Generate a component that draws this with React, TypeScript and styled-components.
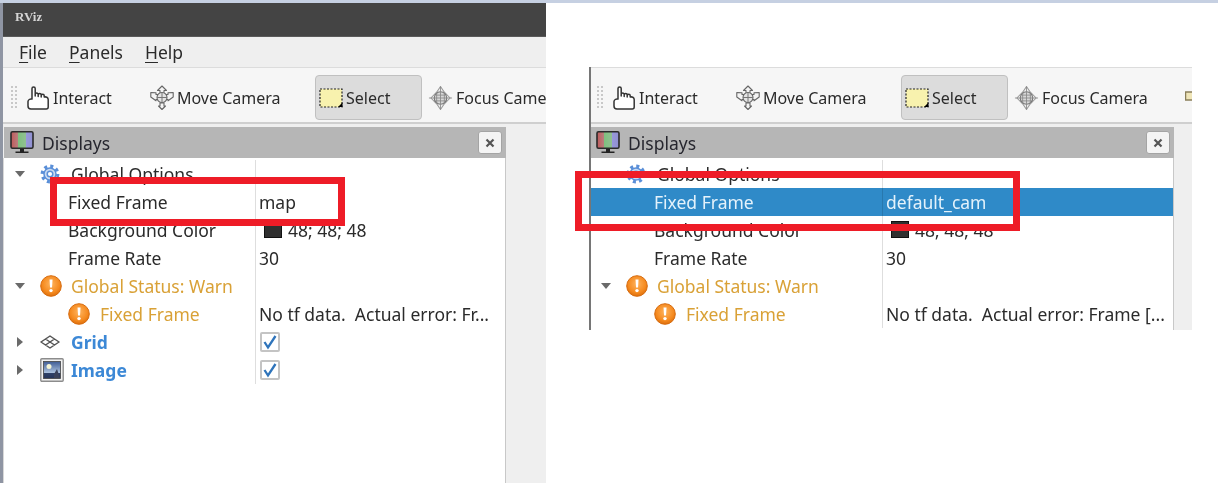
import React from 'react'
import styled, { createGlobalStyle } from 'styled-components'

const GlobalStyle = createGlobalStyle`
  html, body {
    margin: 0;
    background: #fff;
  }
`;

const Page = styled.div`
  position: relative;
  display: flex;
  align-items: flex-start;
  width: 1218px;
  height: 483px;
  box-sizing: border-box;
  overflow: hidden;
  border-top: 3px solid #c6d0e2;
  background: #fff;
  font-family: "Noto Sans", sans-serif;
  font-size: 17.5px;
  color: #2b2b2b;
  filter: blur(0.35px);
`;

const Window = styled.div<{ $w: number; $h: number; $top: number; $left: number; $edge: number; $edgeColor: string }>`
  display: flex;
  flex-direction: column;
  flex: 0 0 auto;
  box-sizing: border-box;
  width: ${p => p.$w}px;
  height: ${p => p.$h}px;
  margin-top: ${p => p.$top}px;
  margin-left: ${p => p.$left}px;
  overflow: hidden;
  border-left: ${p => p.$edge}px solid ${p => p.$edgeColor};
  background: #efefef;
`;

const TitleBar = styled.div`
  flex: 0 0 34px;
  display: flex;
  align-items: center;
  box-sizing: border-box;
  padding: 0 0 6px 12px;
  background: #444444;
  border-bottom: 1px solid #5a5a5a;
  color: #d4d4d4;
  font-family: "Liberation Serif", serif;
  font-size: 13px;
  font-weight: bold;
`;

const MenuBar = styled.div`
  flex: 0 0 30px;
  display: flex;
  align-items: center;
  gap: 22px;
  padding-left: 16px;
  background: #efefef;
`;

const MenuItem = styled.span`
  line-height: 30px;

  u {
    text-underline-offset: 3px;
  }
`;

const ToolBar = styled.div<{ $pad: number }>`
  flex: 0 0 57px;
  display: flex;
  align-items: center;
  box-sizing: border-box;
  padding: 5px 0 0 ${p => p.$pad}px;
  border-top: 1px solid #dcdcdc;
  border-bottom: 2px solid #cfcfcf;
  background: #f6f6f6;
  font-size: 16px;
`;

const Grip = styled.div`
  flex: 0 0 7px;
  height: 25px;
  margin-right: 6px;
  background-image: radial-gradient(circle, #c8c8c8 1px, transparent 1.2px);
  background-size: 4px 4px;
`;

const Tool = styled.div<{ $w: number; $active?: boolean }>`
  flex: 0 0 ${p => p.$w}px;
  display: flex;
  align-items: center;
  gap: 3px;
  box-sizing: border-box;
  height: 45px;
  margin-right: ${p => (p.$active ? 2 : 0)}px;
  padding-left: 3px;
  border-radius: 4px;
  border: 1px solid ${p => (p.$active ? '#c0c0c0' : 'transparent')};
  background: ${p => (p.$active ? '#dcdcdc' : 'transparent')};
`;

const Dock = styled.div<{ $left: number; $right: number }>`
  flex: 1;
  display: flex;
  flex-direction: column;
  min-height: 0;
  margin: 3px ${p => p.$right}px 0 ${p => p.$left}px;
`;

const PanelHeader = styled.div<{ $inset: number }>`
  flex: 0 0 31px;
  display: flex;
  align-items: center;
  gap: 8px;
  padding: 0 4px 0 ${p => p.$inset}px;
  background: #b6b6b6;
`;

const PanelTitle = styled.span`
  flex: 1;
  color: #26262e;
`;

const CloseButton = styled.div`
  display: flex;
  align-items: center;
  justify-content: center;
  width: 24px;
  height: 23px;
  box-sizing: border-box;
  border: 1px solid #a4a4a4;
  border-radius: 3px;
  background: #f4f4f4;
`;

const Tree = styled.div`
  flex: 1;
  padding-top: 2px;
  background: #fff;
  border-right: 1px solid #c8c8c8;
  border-left: 1px solid #d8d8d8;
  margin-left: -1px;
`;

const Row = styled.div<{ $split: number; $selected?: boolean }>`
  display: grid;
  grid-template-columns: ${p => p.$split}px 1fr;
  height: 28px;
  background: ${p => (p.$selected ? '#2f8ac8' : 'transparent')};
  color: ${p => (p.$selected ? '#e4f2fb' : 'inherit')};
`;

const NameCell = styled.div<{ $inset: number }>`
  display: flex;
  align-items: center;
  padding: 0 0 1px ${p => p.$inset}px;
  border-right: 1px solid rgba(0, 0, 0, 0.13);
  white-space: nowrap;
`;

const ArrowSlot = styled.span<{ $depth: number }>`
  flex: 0 0 ${p => (p.$depth ? 54 : 26)}px;
  display: flex;
  align-items: center;
  justify-content: flex-start;
  padding-left: 1px;
  box-sizing: border-box;
`;

const Arrow = styled.span<{ $open: boolean }>`
  width: 0;
  height: 0;
  ${p =>
    p.$open
      ? `
    border-left: 5px solid transparent;
    border-right: 5px solid transparent;
    border-top: 6px solid #6a6a6a;
  `
      : `
    margin-left: 2px;
    border-top: 5px solid transparent;
    border-bottom: 5px solid transparent;
    border-left: 6px solid #6a6a6a;
  `}
`;

const IconSlot = styled.span<{ $w: number }>`
  flex: 0 0 ${p => p.$w}px;
  display: flex;
  align-items: center;
`;

const RowLabel = styled.span<{ $kind?: string }>`
  color: ${p => (p.$kind === 'warn' ? '#d9a136' : p.$kind === 'display' ? '#3c88d6' : 'inherit')};
  font-weight: ${p => (p.$kind === 'display' ? 700 : 400)};
`;

const ValueCell = styled.div`
  display: flex;
  align-items: center;
  gap: 6px;
  padding: 0 0 1px 3px;
  overflow: hidden;
  white-space: pre;
`;

const Swatch = styled.span`
  flex: 0 0 auto;
  box-sizing: border-box;
  width: 18px;
  height: 17px;
  margin-left: 5px;
  border: 1px solid #111;
  background: #303030;
`;

const CheckBox = styled.span`
  display: flex;
  align-items: center;
  justify-content: center;
  box-sizing: border-box;
  width: 20px;
  height: 20px;
  margin-left: 1px;
  border: 2px solid #c4c4c4;
  border-radius: 2px;
  background: #fff;
`;

const RedBox = styled.div<{ $x: number; $y: number; $w: number; $h: number }>`
  position: absolute;
  left: ${p => p.$x}px;
  top: ${p => p.$y}px;
  width: ${p => p.$w}px;
  height: ${p => p.$h}px;
  box-sizing: border-box;
  border: 7px solid #ee1c27;
`;

const HandIcon = () => (
  <svg width="23" height="26" viewBox="2 0 23 26">
    <path
      d="M7 14V3.500a1.600 1.600 0 0 1 3.200 0V11V9.500a1.500 1.500 0 0 1 3 0V11.500V10a1.500 1.500 0 0 1 3 0V12V10.800a1.500 1.500 0 0 1 3 0V12c1.800-.4 4 .2 4 2.500V22a2 2 0 0 1-2 2H6a3 3 0 0 1-3-3v-4.500C3 15 5 13.500 7 14Z"
      fill="#fff"
      stroke="#333"
      strokeWidth="1.500"
      strokeLinejoin="round"
    />
  </svg>
);

const MoveIcon = () => (
  <svg width="24" height="26" viewBox="0 0 24 26">
    <g fill="#f4f4f4" stroke="#666" strokeWidth="1.100" strokeLinejoin="round">
      <path d="M12 1l4.500 4.500H14V8h-4V5.500H7.500z" />
      <path d="M12 24.500l3.500-3.500H14v-3h-4v3H8.500z" />
      <path d="M.8 7.500L6 7.800v1.700h3v5H6v1.200L.8 12z" />
      <path d="M23.200 7.500L18 7.800v1.700h-3v5h3v1.200L23.200 12z" />
      <circle cx="12" cy="12.500" r="5" fill="#e4e4e4" />
    </g>
    <path d="M7 12.500h10M12 7.500v10" stroke="#777" strokeWidth="1" />
  </svg>
);

const SelectIcon = () => (
  <svg width="24" height="20" viewBox="0 0 24 20">
    <rect x="1" y="1" width="22" height="18" fill="#f8f2ae" stroke="#222" strokeWidth="1.200" strokeDasharray="2 1.500" />
    <path d="M19 19h4.500v-4.500z" fill="#000" />
  </svg>
);

const FocusIcon = () => (
  <svg width="25" height="26" viewBox="0 0 26 26">
    <path d="M13 1l4 6 6 6-6 6-4 6-4-6-6-6 6-6z" fill="#efefef" stroke="#999" strokeWidth="1.100" strokeLinejoin="round" />
    <circle cx="13" cy="13" r="6.500" fill="#d8d8d8" stroke="#777" strokeWidth="1.200" />
    <path d="M1 13h24M13 1v24M9 8v10M17 8v10M8 10h10M8 16h10" stroke="#8a8a8a" strokeWidth="0.900" />
  </svg>
);

const NextToolIcon = () => (
  <svg width="24" height="26" viewBox="0 0 24 26">
    <rect x="0.500" y="7" width="14" height="8" fill="#efe5b8" stroke="#8a7f5a" strokeWidth="1.500" />
  </svg>
);

const MonitorIcon = () => (
  <svg width="24" height="24" viewBox="0 0 24 24">
    <defs>
      <linearGradient id="screenColors" x1="0" x2="1" y1="0" y2="0">
        <stop offset="0" stopColor="#c05a5a" />
        <stop offset="0.33" stopColor="#b98080" />
        <stop offset="0.34" stopColor="#7fc07f" />
        <stop offset="0.66" stopColor="#90c090" />
        <stop offset="0.67" stopColor="#9898dc" />
        <stop offset="1" stopColor="#9090d0" />
      </linearGradient>
    </defs>
    <rect x="1" y="0.800" width="22" height="16.500" rx="1.500" fill="url(#screenColors)" stroke="#2a2a2a" strokeWidth="1.600" />
    <path d="M10 18h4v2.500h4.500v1.500h-13v-1.500H10z" fill="#222" />
  </svg>
);

const GearIcon = () => (
  <svg width="20" height="20" viewBox="0 0 20 20">
    <circle cx="10" cy="10" r="7.700" fill="none" stroke="#5a8fd8" strokeWidth="3.400" strokeDasharray="3 3.050" />
    <circle cx="10" cy="10" r="6" fill="#c9daf2" stroke="#5a8fd8" strokeWidth="1.500" />
    <circle cx="10" cy="10" r="2.800" fill="#fff" stroke="#5a8fd8" strokeWidth="1.500" />
  </svg>
);

const WarnIcon = () => (
  <svg width="22" height="22" viewBox="0 0 22 22">
    <defs>
      <radialGradient id="warnFill" cx="0.5" cy="0.4" r="0.6">
        <stop offset="0" stopColor="#ffb45e" />
        <stop offset="0.7" stopColor="#f58a1f" />
        <stop offset="1" stopColor="#dd6f0c" />
      </radialGradient>
    </defs>
    <circle cx="11" cy="11" r="10.300" fill="url(#warnFill)" stroke="#d76c0f" strokeWidth="1" />
    <path d="M9.500 4.500h3l-.5 8h-2z" fill="#fff" />
    <circle cx="11" cy="15.600" r="1.700" fill="#fff" />
  </svg>
);

const GridIcon = () => (
  <svg width="20" height="14" viewBox="0 0 20 14">
    <path d="M10 1l9 6-9 6-9-6zM5.500 4l9 6M14.500 4l-9 6" fill="none" stroke="#555" strokeWidth="1.500" strokeLinejoin="round" />
  </svg>
);

const ImageIcon = () => (
  <svg width="24" height="24" viewBox="0 0 24 24">
    <defs>
      <linearGradient id="imageSky" x1="0" x2="0" y1="0" y2="1">
        <stop offset="0" stopColor="#3f5c94" />
        <stop offset="0.65" stopColor="#a9bfdc" />
        <stop offset="0.7" stopColor="#2e4067" />
        <stop offset="1" stopColor="#26345a" />
      </linearGradient>
    </defs>
    <rect x="0.800" y="0.800" width="22.400" height="22.400" rx="1" fill="#f2f2f2" stroke="#8c8c8c" strokeWidth="1.400" />
    <rect x="3.500" y="3.500" width="17" height="17" fill="url(#imageSky)" stroke="#444" strokeWidth="0.800" />
    <circle cx="9" cy="8.500" r="2.500" fill="#f4f4d4" />
    <path d="M14 16l3-5 3 9h-6z" fill="#39415a" />
  </svg>
);

const CheckIcon = () => (
  <svg width="16" height="16" viewBox="0 0 16 16">
    <path d="M2.500 8l3.500 5.500L13.500 2" fill="none" stroke="#2f74bb" strokeWidth="2.300" />
  </svg>
);

const CloseGlyph = () => (
  <svg width="10" height="10" viewBox="0 0 10 10">
    <path d="M1.500 1.500l7 7M8.500 1.500l-7 7" stroke="#555" strokeWidth="2.200" />
  </svg>
);

const tools = [
  { label: 'Interact', w: 123, icon: <HandIcon /> },
  { label: 'Move Camera', w: 169, icon: <MoveIcon /> },
  { label: 'Select', w: 107, icon: <SelectIcon />, active: true },
  { label: 'Focus Camera', w: 171, icon: <FocusIcon /> },
  { label: '', w: 60, icon: <NextToolIcon /> },
];

interface TreeRow {
  name: string;
  depth: number;
  arrow?: 'open' | 'closed';
  icon?: React.ReactNode;
  kind?: string;
  value?: React.ReactNode;
}

const makeRows = (frame: string, error: string, extra: boolean): TreeRow[] => {
  const rows: TreeRow[] = [
    { name: 'Global Options', depth: 0, arrow: 'open', icon: <GearIcon /> },
    { name: 'Fixed Frame', depth: 1, value: frame },
    { name: 'Background Color', depth: 1, value: <><Swatch />48; 48; 48</> },
    { name: 'Frame Rate', depth: 1, value: '30' },
    { name: 'Global Status: Warn', depth: 0, arrow: 'open', icon: <WarnIcon />, kind: 'warn' },
    { name: 'Fixed Frame', depth: 1, icon: <WarnIcon />, kind: 'warn', value: error },
  ];
  if (extra) {
    rows.push(
      { name: 'Grid', depth: 0, arrow: 'closed', icon: <GridIcon />, kind: 'display', value: <CheckBox><CheckIcon /></CheckBox> },
      { name: 'Image', depth: 0, arrow: 'closed', icon: <ImageIcon />, kind: 'display', value: <CheckBox><CheckIcon /></CheckBox> },
    );
  }
  return rows;
};

interface RVizProps {
  chrome: boolean;
  split: number;
  inset: number;
  selected?: number;
  rows: TreeRow[];
}

const RVizBody: React.FC<RVizProps> = ({ chrome, split, inset, selected, rows }) => (
  <>
    {chrome && (
      <>
        <TitleBar>RViz</TitleBar>
        <MenuBar>
          <MenuItem><u>F</u>ile</MenuItem>
          <MenuItem><u>P</u>anels</MenuItem>
          <MenuItem><u>H</u>elp</MenuItem>
        </MenuBar>
      </>
    )}
    <ToolBar $pad={chrome ? 7 : 5}>
      <Grip />
      {tools.map((t, i) => (
        <Tool key={i} $w={t.w} $active={t.active}>
          {t.icon}
          <span>{t.label}</span>
        </Tool>
      ))}
    </ToolBar>
    <Dock $left={chrome ? 1 : 0} $right={chrome ? 40 : 18}>
      <PanelHeader $inset={inset - 4}>
        <MonitorIcon />
        <PanelTitle>Displays</PanelTitle>
        <CloseButton><CloseGlyph /></CloseButton>
      </PanelHeader>
      <Tree>
        {rows.map((r, i) => (
          <Row key={i} $split={split} $selected={i === selected}>
            <NameCell $inset={inset}>
              <ArrowSlot $depth={r.depth}>
                {r.arrow && <Arrow $open={r.arrow === 'open'} />}
              </ArrowSlot>
              {r.icon && <IconSlot $w={r.depth ? 32 : 31}>{r.icon}</IconSlot>}
              <RowLabel $kind={r.kind}>{r.name}</RowLabel>
            </NameCell>
            <ValueCell>{r.value}</ValueCell>
          </Row>
        ))}
      </Tree>
    </Dock>
  </>
);

const App: React.FC = () => {
  return (
    <Page>
      <GlobalStyle />
      <Window $w={546} $h={480} $top={0} $left={0} $edge={3} $edgeColor="#8f95a3">
        <RVizBody
          chrome
          split={252}
          inset={10}
          rows={makeRows('map', 'No tf data.  Actual error: Fr...', true)}
        />
      </Window>
      <Window $w={603} $h={263} $top={64} $left={43} $edge={2} $edgeColor="#767676">
        <RVizBody
          chrome={false}
          split={292}
          inset={9}
          selected={1}
          rows={makeRows('default_cam', 'No tf data.  Actual error: Frame [...', false)}
        />
      </Window>
      <RedBox $x={50} $y={174} $w={295} $h={49} />
      <RedBox $x={575} $y={168} $w={445} $h={60} />
    </Page>
  )
}

export default App
